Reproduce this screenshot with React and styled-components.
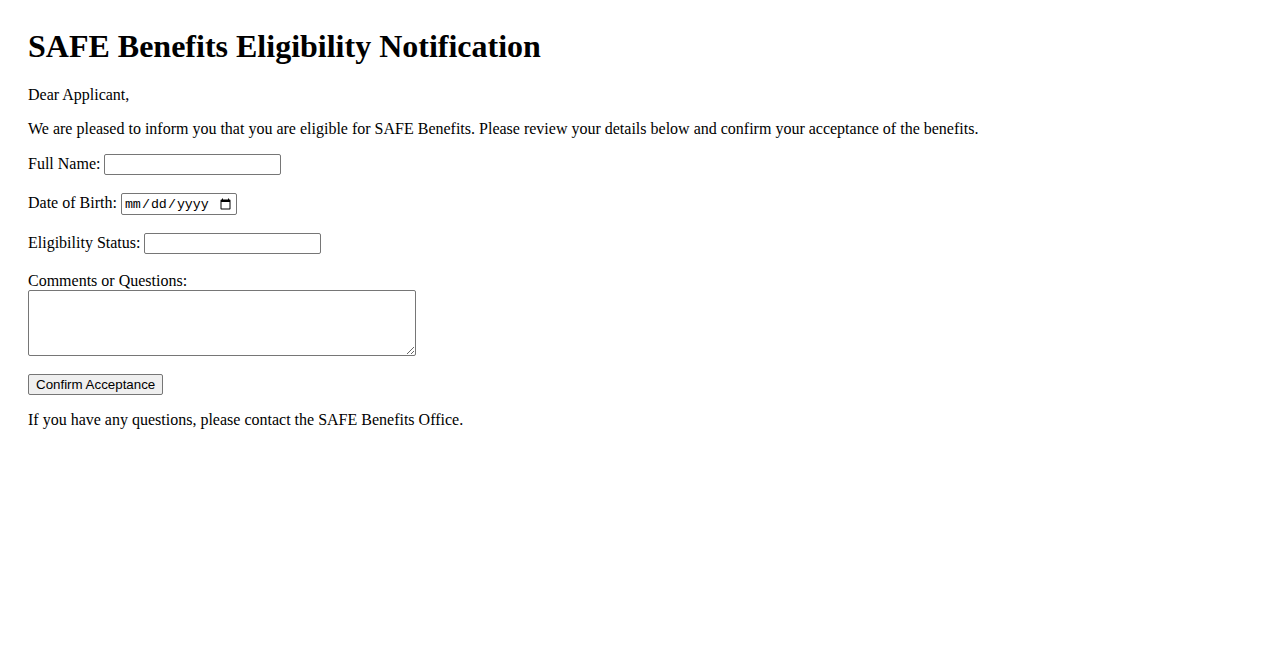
import styled, { createGlobalStyle } from 'styled-components';

const GlobalStyle = createGlobalStyle`
    body {
        margin: 0;
        background: #fff;
        color: #000;
        font-family: "Liberation Serif", "Times New Roman", serif;
        font-size: 16px;
    }
`;

const Page = styled.div`
    padding: 28px;
`;

const Title = styled.h1`
    font-size: 32px;
    font-weight: bold;
    margin: 0 0 21.44px;
`;

const Text = styled.p`
    margin: 16px 0;
`;

const Field = styled.div`
    margin: 16px 0 18px;

    &:last-child {
        margin-bottom: 16px;
    }
`;

const Label = styled.label`
    margin-right: 4px;
`;

const TextInput = styled.input`
    box-sizing: border-box;
    width: ${(p) => p.$width || 177}px;
    height: ${(p) => p.$height || 21}px;
    border: 1px solid #767676;
    border-radius: 2px;
    padding: 1px 2px;
    font-family: ${(p) => (p.$mono ? '"Liberation Mono", monospace' : '"Liberation Sans", Arial, sans-serif')};
    font-size: 13.33px;
    vertical-align: baseline;
`;

const TextArea = styled.textarea`
    display: block;
    box-sizing: border-box;
    width: 388px;
    height: 66px;
    border: 1px solid #767676;
    border-radius: 2px;
    padding: 2px;
    font-family: "Liberation Mono", monospace;
    font-size: 13.33px;
`;

const Button = styled.button`
    box-sizing: border-box;
    height: 21px;
    padding: 1px 7px;
    background: #efefef;
    border: 1px solid #767676;
    border-radius: 2px;
    font-family: "Liberation Sans", Arial, sans-serif;
    font-size: 13.33px;
    color: #000;
`;

const App = () => {
    return (
        <Page>
            <GlobalStyle />
            <Title>SAFE Benefits Eligibility Notification</Title>
            <Text>Dear Applicant,</Text>
            <Text>
                We are pleased to inform you that you are eligible for SAFE Benefits. Please review your details below and
                confirm your acceptance of the benefits.
            </Text>
            <form>
                <Field>
                    <Label htmlFor='fullName'>Full Name:</Label>
                    <TextInput id='fullName' type='text' />
                </Field>
                <Field>
                    <Label htmlFor='dob'>Date of Birth:</Label>
                    <TextInput id='dob' type='date' $mono $width={116} $height={22} />
                </Field>
                <Field>
                    <Label htmlFor='status'>Eligibility Status:</Label>
                    <TextInput id='status' type='text' />
                </Field>
                <Field>
                    <Label htmlFor='comments'>Comments or Questions:</Label>
                    <TextArea id='comments' />
                </Field>
                <Field>
                    <Button type='button'>Confirm Acceptance</Button>
                </Field>
            </form>
            <Text>If you have any questions, please contact the SAFE Benefits Office.</Text>
        </Page>
    );
};

export default App;
